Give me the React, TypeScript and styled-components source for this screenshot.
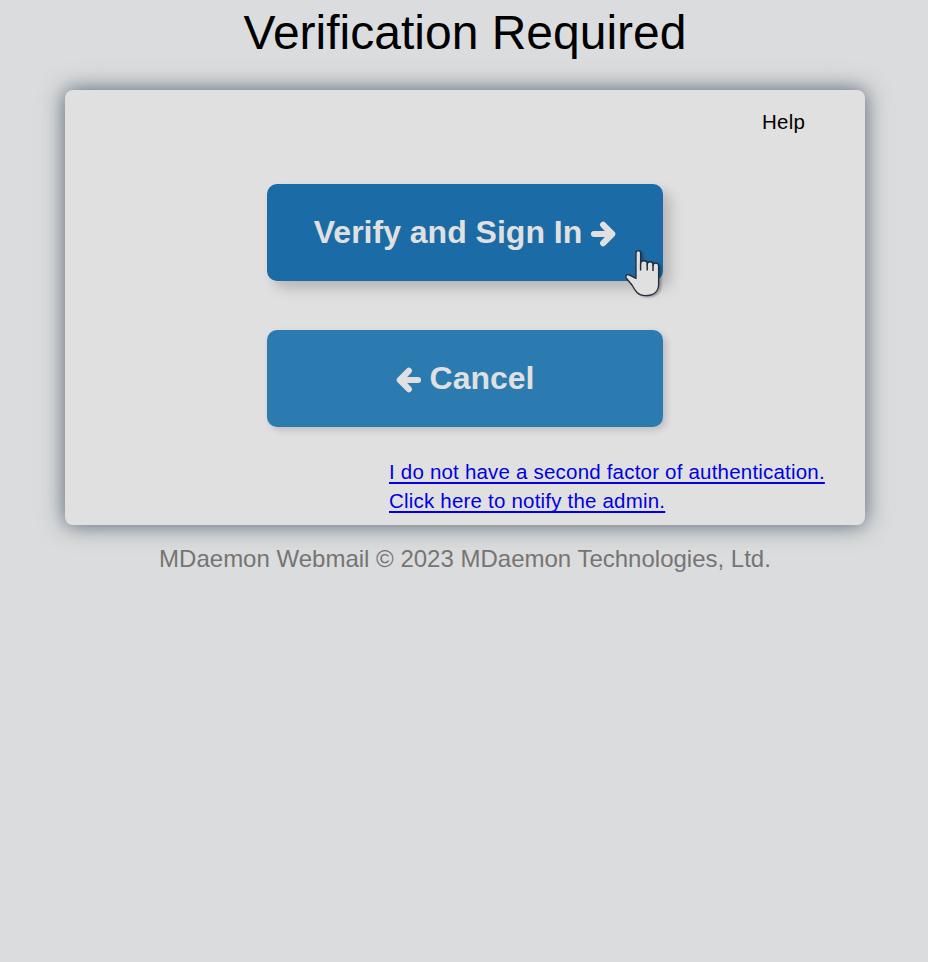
import React from "react";
import styled, { createGlobalStyle } from "styled-components";

const GlobalStyle = createGlobalStyle`
  * { box-sizing: border-box; }
  body {
    margin: 0;
    min-height: 100vh;
    background: #dbdcdd;
    font-family: "Liberation Sans", Arial, sans-serif;
    color: #000;
  }
`;

const Page = styled.main`
  display: flex;
  flex-direction: column;
  align-items: center;
  min-height: 100vh;
  padding-left: 2px;
`;

const Title = styled.h1`
  margin: 5px 0 30px;
  font-size: 48px;
  line-height: 55px;
  font-weight: 400;
`;

const Card = styled.section`
  display: flex;
  flex-direction: column;
  align-items: center;
  width: 800px;
  height: 435px;
  border-radius: 8px;
  background: #e0e0e0;
  box-shadow: 0 0 20px rgba(54, 62, 84, 0.68), 0 0 28px rgba(120, 155, 145, 0.35);
`;

const HelpLink = styled.a`
  align-self: flex-end;
  margin: 20px 60px 0 0;
  font-size: 20.5px;
  line-height: 24px;
  letter-spacing: 0.2px;
`;

const Actions = styled.div`
  display: flex;
  flex-direction: column;
  gap: 49px;
  margin-top: 50px;
`;

const ActionButton = styled.button<{ $active?: boolean }>`
  position: relative;
  display: flex;
  align-items: center;
  justify-content: center;
  gap: 9px;
  width: 396px;
  height: 97px;
  padding: 0 0 2px;
  border: 0;
  border-radius: 10px;
  background: ${(p) => (p.$active ? "#1b6ca6" : "#2b7bb0")};
  color: #e0e0e0;
  font: bold 32px/36px "Liberation Sans", Arial, sans-serif;
  box-shadow: ${(p) =>
    p.$active
      ? "8px 8px 14px rgba(0, 0, 0, 0.15), 5px 5px 12px rgba(0, 0, 0, 0.05)"
      : "3px 3px 7px rgba(0, 0, 0, 0.16)"};
`;

const ArrowIcon = styled.svg<{ $back?: boolean }>`
  width: 25px;
  height: 26px;
  margin-top: 4px;
  transform: ${(p) => (p.$back ? "scaleX(-1)" : "none")};
`;

const Pointer = styled.svg`
  position: absolute;
  left: 357px;
  top: 64px;
  width: 40px;
  height: 50px;
  overflow: visible;
  filter: drop-shadow(2px 1px 1px rgba(0, 0, 0, 0.3));
`;

const AdminLink = styled.a`
  align-self: flex-end;
  width: 436px;
  margin: 30px 40px 0 0;
  color: #0000e0;
  font-size: 20.5px;
  line-height: 29px;
  letter-spacing: 0.2px;
  white-space: nowrap;
  text-decoration: underline;
  text-decoration-thickness: 2px;
  text-underline-offset: 3px;
  text-decoration-skip-ink: none;
`;

const Footer = styled.footer`
  margin-top: 20px;
  color: #757575;
  font-size: 24px;
  line-height: 28px;
`;

const Arrow = ({ back }: { back?: boolean }) => (
  <ArrowIcon $back={back} viewBox="0 0 25 26" aria-hidden="true">
    <path
      d="M3 13H20M12.2 3.8L21.2 13L12.2 22.2"
      fill="none"
      stroke="currentColor"
      strokeWidth="6.2"
      strokeLinecap="round"
      strokeLinejoin="round"
    />
  </ArrowIcon>
);

const HandPointer = () => (
  <Pointer viewBox="0 0 40 50" aria-hidden="true">
    <path
      d="M12 29.5V4.9a2.3 2.3 0 0 1 4.6 0V15.500C16.6 11.8 23.2 11.8 23.2 15.5V16.5C23.2 12.8 29 12.8 29 16.5V17.5C29 14.2 34.6 14.2 34.6 17.8V36C34.6 43 30 47.6 21.5 47.6C13.5 47.6 11 42.5 8 37L2.5 30.5C1 28 2.5 26.3 4.5 26.8C7 27.4 9 29.5 12 30.5z"
      fill="#e0e0e0"
      stroke="#222c3a"
      strokeWidth="1.3"
      strokeLinejoin="round"
    />
    <path d="M16.6 15v7.5M23.2 15.5v7M29 16.5v6.5" stroke="#222c3a" strokeWidth="1.5" />
  </Pointer>
);

export default function App() {
  return (
    <>
      <GlobalStyle />
      <Page>
        <Title>Verification Required</Title>
        <Card>
          <HelpLink>Help</HelpLink>
          <Actions>
            <ActionButton $active>
              <span>Verify and Sign In</span>
              <Arrow />
              <HandPointer />
            </ActionButton>
            <ActionButton>
              <Arrow back />
              <span>Cancel</span>
            </ActionButton>
          </Actions>
          <AdminLink>
            I do not have a second factor of authentication.
            <br />
            Click here to notify the admin.
          </AdminLink>
        </Card>
        <Footer>MDaemon Webmail © 2023 MDaemon Technologies, Ltd.</Footer>
      </Page>
    </>
  );
}
